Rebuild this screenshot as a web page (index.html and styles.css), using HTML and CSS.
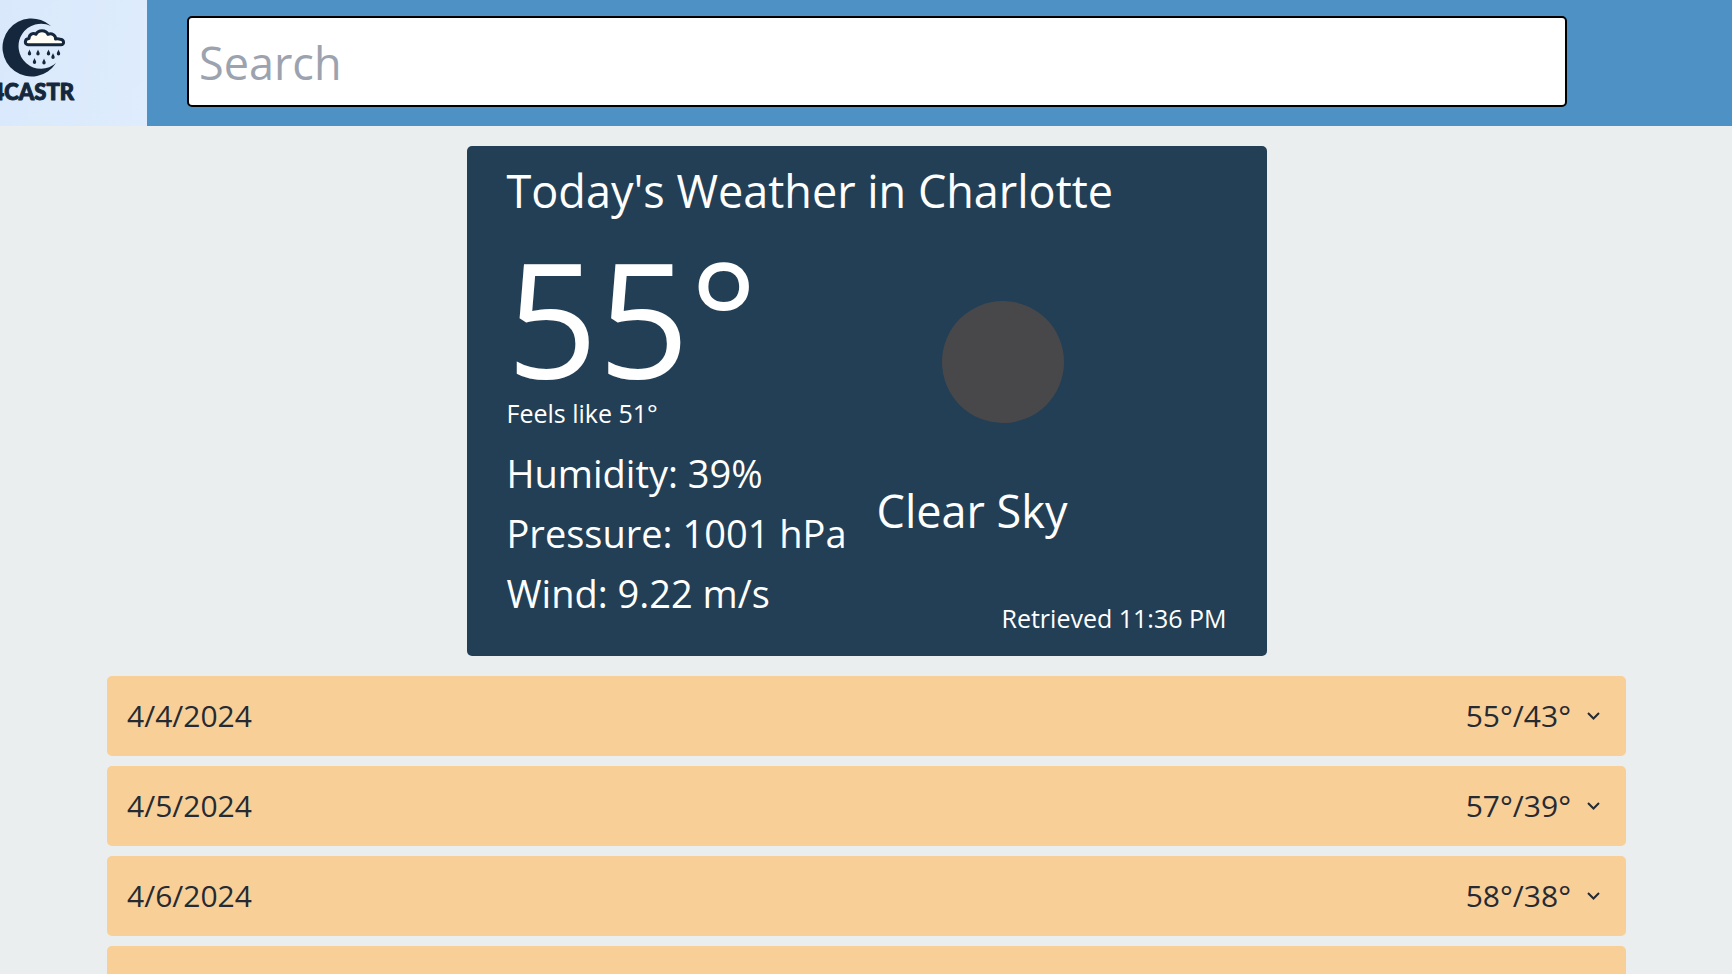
FILE: index.html
```html
<!DOCTYPE html>
<html lang="en">
<head>
<meta charset="utf-8">
<title>4CASTR</title>
<link rel="stylesheet" href="styles.css">
</head>
<body>
<header class="header">
  <a class="logo" href="#" aria-label="4CASTR home">
    <svg class="logo-art" viewBox="0 0 147 126" width="147" height="126">
      <path class="ink" d="M51 26A29 29 0 1 0 56 63A22.5 22.5 0 1 1 51 26Z"/>
      <path class="cloud" d="M28 44.700C24.300 44.700 24.300 39 29 38.600C29 34 33 32.500 36 34.300C38 29.500 46 29.500 48 34.300C52 32.700 56 35.500 55.500 39C57.500 38.500 59 38.800 60.500 39.300C64.500 40 64.500 44.700 61 44.700Z"/>
      <g class="ink">
        <path id="drop" d="M29.500 49.500C30 51.500 31.200 52.300 31.200 53.700A1.700 1.700 0 0 1 27.800 53.700C27.800 52.300 29 51.500 29.500 49.500Z"/>
        <use href="#drop" x="8.500"/>
        <use href="#drop" x="19"/>
        <use href="#drop" x="23.500" y="3.500"/>
        <use href="#drop" x="29"/>
        <use href="#drop" x="5" y="8.500"/>
        <use href="#drop" x="14.500" y="9"/>
      </g>
      <text class="logo-text" x="74" y="100" text-anchor="end">4CASTR</text>
    </svg>
  </a>
  <form class="search">
    <input class="search-input" type="text" placeholder="Search" aria-label="Search">
  </form>
</header>
<main class="main">
  <section class="card">
    <h1 class="card-title">Today's Weather in Charlotte</h1>
    <div class="card-body">
      <div class="readings">
        <p class="temp">55°</p>
        <p class="small">Feels like 51°</p>
        <div class="details">
          <p>Humidity: 39%</p>
          <p>Pressure: 1001 hPa</p>
          <p>Wind: 9.22 m/s</p>
        </div>
      </div>
      <div class="sky">
        <svg class="sky-icon" viewBox="0 0 250 250" width="250" height="250" aria-hidden="true"><circle cx="126" cy="126" r="61"/></svg>
        <p class="sky-name">Clear Sky</p>
        <p class="small retrieved">Retrieved 11:36 PM</p>
      </div>
    </div>
  </section>
  <section class="forecast">
    <button class="day" type="button"><span>4/4/2024</span><span class="range">55°/43°<svg class="chevron" viewBox="0 0 25 25" width="25" height="25"><path d="M7 9L12.500 14.500L18 9"/></svg></span></button>
    <button class="day" type="button"><span>4/5/2024</span><span class="range">57°/39°<svg class="chevron" viewBox="0 0 25 25" width="25" height="25"><path d="M7 9L12.500 14.500L18 9"/></svg></span></button>
    <button class="day" type="button"><span>4/6/2024</span><span class="range">58°/38°<svg class="chevron" viewBox="0 0 25 25" width="25" height="25"><path d="M7 9L12.500 14.500L18 9"/></svg></span></button>
    <button class="day" type="button" aria-label="4/7/2024"></button>
  </section>
</main>
</body>
</html>
```
FILE: styles.css
```css
* { box-sizing: border-box; margin: 0; padding: 0; }

body {
  height: 100vh;
  overflow: hidden;
  background: #eaeeef;
  color: #252a33;
  font-family: "Open Sans", "Noto Sans", sans-serif;
}

.header {
  display: flex;
  align-items: flex-start;
  background: #4e91c5;
}

.logo {
  flex: none;
  background: linear-gradient(100deg, #d9e9fb, #deecfd);
}
.logo-art { display: block; }
.ink { fill: #14273d; }
.cloud { fill: #fffdf4; stroke: #14273d; stroke-width: 3; stroke-linejoin: round; }
.logo-text {
  fill: #14273d;
  stroke: #14273d;
  stroke-width: 1;
  stroke-linejoin: round;
  font-family: Lato, sans-serif;
  font-size: 22px;
  font-weight: 900;
}

.search { flex: 1; padding: 16px 165px 16px 40px; }
.search-input {
  display: block;
  width: 100%;
  height: 91px;
  padding: 2px 10px 0;
  border: 2px solid #000;
  border-radius: 5px;
  background: #fff;
  color: #252a33;
  font-family: inherit;
  font-size: 45px;
}
.search-input::placeholder { color: #9ca3af; opacity: 1; }

.main {
  display: flex;
  flex-direction: column;
  gap: 20px;
  padding: 20px 106px 20px 107px;
}

.card {
  align-self: center;
  width: 100%;
  max-width: 800px;
  padding: 20px 40px;
  border-radius: 5px;
  background: #233f56;
  color: #fff;
}
.card-title { font-size: 45px; font-weight: 400; line-height: 50px; }
.card-body { display: flex; gap: 30px; margin-top: 20px; }
.temp { font-size: 160px; line-height: 160px; }
.small { font-size: 25px; line-height: 35px; }
.details {
  display: grid;
  gap: 15px;
  margin-top: 20px;
  font-size: 38px;
  line-height: 45px;
}
.sky { flex: 1; display: flex; flex-direction: column; }
.sky-icon { display: block; fill: #48484a; }
.sky-name { font-size: 45px; line-height: 50px; }
.retrieved { margin-top: 65px; text-align: right; }

.forecast { display: grid; gap: 10px; }
.day {
  display: flex;
  align-items: center;
  justify-content: space-between;
  height: 80px;
  padding: 20px;
  border: 0;
  border-radius: 5px;
  background: #f8cf97;
  color: inherit;
  font-family: inherit;
  font-size: 30px;
  font-weight: 400;
  line-height: 40px;
}
.range { display: flex; align-items: center; gap: 10px; }
.chevron { fill: none; stroke: #252a33; stroke-width: 2; }
```
